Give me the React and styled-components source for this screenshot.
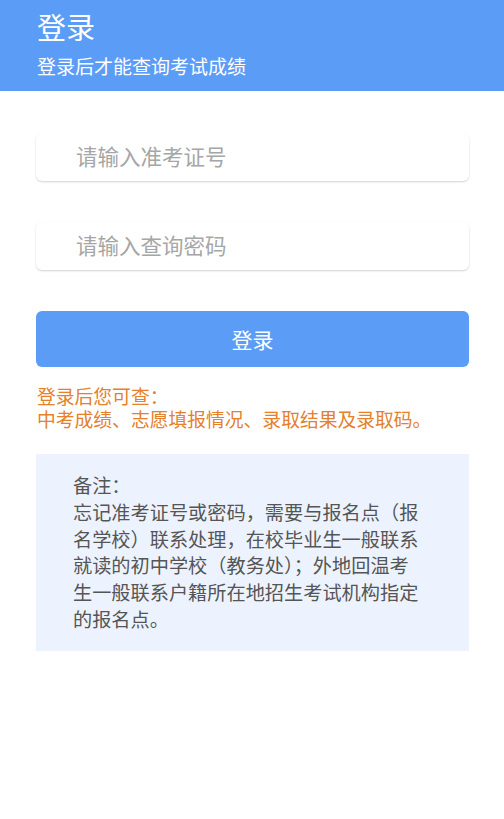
import styled, { createGlobalStyle } from "styled-components";

const GlobalStyle = createGlobalStyle`
  body {
    margin: 0;
    background: #ffffff;
    font-family: "Noto Sans CJK SC", "Noto Sans", sans-serif;
  }
`

const Header = styled.header`
  height: 91px;
  background-color: #5b9cf6;
  padding: 7px 37px 0;
  box-sizing: border-box;
  color: #ffffff;
`

const Title = styled.h1`
  margin: 0;
  font-size: 29px;
  font-weight: normal;
  line-height: 38px;
`

const Subtitle = styled.p`
  margin: 9px 0 0;
  font-size: 19px;
  line-height: 24px;
`

const Main = styled.main`
  padding: 42px 35px 0 36px;
  display: flex;
  flex-direction: column;
`

const Field = styled.input`
  box-sizing: border-box;
  height: 48px;
  border: none;
  border-radius: 6px;
  box-shadow: 0 1px 2px rgba(0, 0, 0, 0.18);
  padding: 0 0 4px 40px;
  font-family: inherit;
  font-size: 21.5px;
  color: #333;
  outline: none;
  margin-bottom: ${(p) => p.$gap}px;

  &::placeholder {
    color: #a6a6a6;
  }
`

const Button = styled.button`
  height: 56px;
  border: none;
  border-radius: 6px;
  background-color: #5b9cf6;
  color: #ffffff;
  font-family: inherit;
  font-size: 21px;
`

const Tip = styled.p`
  margin: 17px 0 0 1px;
  color: #e5802b;
  font-size: 18.8px;
  line-height: 23px;
`

const Notes = styled.div`
  margin-top: 24px;
  background-color: #ecf3fe;
  padding: 18px 50px 18px 37px;
  color: #555555;
  font-size: 19.2px;
  line-height: 26.8px;
`

export default function App() {
  return (
    <>
      <GlobalStyle />
      <Header>
        <Title>登录</Title>
        <Subtitle>登录后才能查询考试成绩</Subtitle>
      </Header>
      <Main>
        <Field placeholder="请输入准考证号" $gap={41} />
        <Field type="password" placeholder="请输入查询密码" $gap={41} />
        <Button>登录</Button>
        <Tip>
          登录后您可查：
          <br />
          中考成绩、志愿填报情况、录取结果及录取码。
        </Tip>
        <Notes>
          备注：
          <br />
          忘记准考证号或密码，需要与报名点（报名学校）联系处理，在校毕业生一般联系就读的初中学校（教务处）；外地回温考生一般联系户籍所在地招生考试机构指定的报名点。
        </Notes>
      </Main>
    </>
  );
}
